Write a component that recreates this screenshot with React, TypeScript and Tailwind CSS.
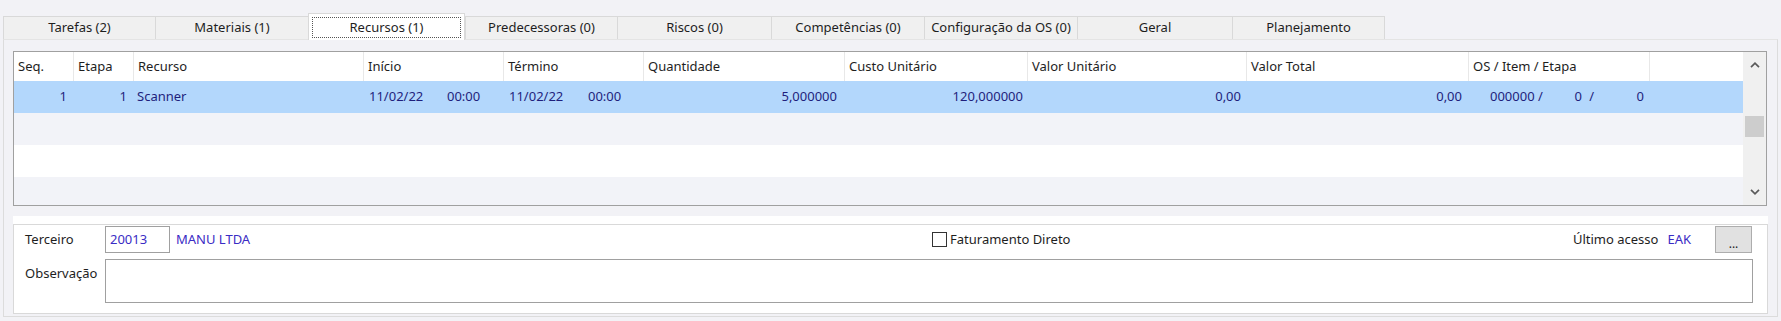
import React from "react";

const tabs: { label: string; cls: string; active?: boolean }[] = [
  { label: "Tarefas (2)", cls: "w-[152px]" },
  { label: "Materiais (1)", cls: "w-[153px]" },
  { label: "Recursos (1)", cls: "w-[157px]", active: true },
  { label: "Predecessoras (0)", cls: "w-[152px]" },
  { label: "Riscos (0)", cls: "w-[154px]" },
  { label: "Competências (0)", cls: "w-[153px]" },
  { label: "Configuração da OS (0)", cls: "w-[153px]" },
  { label: "Geral", cls: "w-[155px]" },
  { label: "Planejamento", cls: "w-[153px] border-r" },
];

const headers: { label: string; cls: string }[] = [
  { label: "Seq.", cls: "w-[60px]" },
  { label: "Etapa", cls: "w-[60px]" },
  { label: "Recurso", cls: "w-[230px]" },
  { label: "Início", cls: "w-[140px]" },
  { label: "Término", cls: "w-[140px]" },
  { label: "Quantidade", cls: "w-[201px]" },
  { label: "Custo Unitário", cls: "w-[183px]" },
  { label: "Valor Unitário", cls: "w-[219px]" },
  { label: "Valor Total", cls: "w-[222px]" },
  { label: "OS / Item / Etapa", cls: "w-[181px]" },
];

function Chevron({ up }: { up?: boolean }) {
  return (
    <svg width="10" height="6" viewBox="0 0 10 6">
      <polyline
        points={up ? "1,5.2 5,1.2 9,5.2" : "1,0.8 5,4.8 9,0.8"}
        fill="none"
        stroke="#5a5a5a"
        strokeWidth="1.7"
      />
    </svg>
  );
}

export default function App() {
  return (
    <div
      className="w-[1781px] h-[321px] bg-[#f2f2f6] overflow-hidden text-[13px] text-[#1e1e1e]"
      style={{ fontFamily: '"Noto Sans", "Open Sans", sans-serif' }}
    >
      {/* Tabs */}
      <div className="h-[39px] flex items-end pl-[3px]">
        {tabs.map((t) =>
          t.active ? (
            <div
              key={t.label}
              className={`${t.cls} h-[27px] -mb-px relative z-10 bg-white border border-b-0 border-[#d9d9d9] p-[3px] pb-[3px]`}
            >
              <div className="w-full h-[21px] border border-dotted border-[#555] flex items-center justify-center leading-none">
                {t.label}
              </div>
            </div>
          ) : (
            <div
              key={t.label}
              className={`${t.cls} h-[23px] bg-[#f0f0f0] border-l border-t border-[#d9d9d9] flex items-center justify-center leading-none pb-[1px]`}
            >
              {t.label}
            </div>
          )
        )}
      </div>

      {/* Tab panel */}
      <div className="ml-[3px] w-[1775px] h-[278px] border border-[#dcdcdc] border-t-[#e4e4e4] pl-[9px] pt-[11px]">
        {/* Grid */}
        <div className="w-[1754px] h-[155px] border border-[#a0a0a0] flex bg-white">
          <div className="w-[1729px] flex flex-col">
            <div className="h-[29px] flex bg-white">
              {headers.map((h) => (
                <div
                  key={h.label}
                  className={`${h.cls} border-r border-[#e8e8e8] pl-[4px] flex items-center`}
                >
                  {h.label}
                </div>
              ))}
              <div className="flex-1" />
            </div>
            <div className="h-[32px] flex bg-[#b3d7fc] text-[#1f1f7c] items-center">
              <div className="w-[60px] text-right pr-[7px]">1</div>
              <div className="w-[60px] text-right pr-[7px]">1</div>
              <div className="w-[230px] pl-[3px]">Scanner</div>
              <div className="w-[140px] pl-[5px] flex">
                <span className="w-[78px]">11/02/22</span>
                <span>00:00</span>
              </div>
              <div className="w-[140px] pl-[5px] flex">
                <span className="w-[79px]">11/02/22</span>
                <span>00:00</span>
              </div>
              <div className="w-[201px] text-right pr-[8px]">5,000000</div>
              <div className="w-[183px] text-right pr-[5px]">120,000000</div>
              <div className="w-[219px] text-right pr-[6px]">0,00</div>
              <div className="w-[222px] text-right pr-[7px]">0,00</div>
              <div className="w-[181px] flex">
                <span className="w-[21px]" />
                <span className="w-[60px]">000000 /</span>
                <span className="w-[32px] text-right">0</span>
                <span className="w-[12px] text-right">/</span>
                <span className="w-[50px] text-right">0</span>
              </div>
              <div className="flex-1" />
            </div>
            <div className="h-[32px] bg-[#f2f3f8]" />
            <div className="h-[32px] bg-white" />
            <div className="flex-1 bg-[#f2f3f8]" />
          </div>
          {/* Scrollbar */}
          <div className="w-[23px] bg-[#f0f0f0] flex flex-col">
            <div className="h-[26px] flex items-center justify-center">
              <Chevron up />
            </div>
            <div className="h-[38px]" />
            <div className="h-[21px] mx-[2px] bg-[#cdcdcd]" />
            <div className="flex-1" />
            <div className="h-[26px] flex items-center justify-center">
              <Chevron />
            </div>
          </div>
        </div>

        {/* Bottom section */}
        <div className="mt-[10px] w-[1755px] bg-white pt-[8px]">
          <div className="h-[90px] border border-[#d9d9d9] pl-[11px] bg-white">
            <div className="mt-[1px] h-[27px] flex items-center">
              <div className="w-[80px]">Terceiro</div>
              <div className="w-[65px] h-[27px] border border-[#a0a0a0] bg-white pl-[4px] flex items-center text-[#3a2cc4]">
                20013
              </div>
              <div className="w-[762px] pl-[6px] text-[#3a2cc4]">MANU LTDA</div>
              <div className="flex items-center">
                <div className="w-[15px] h-[15px] border border-[#333] bg-white" />
                <span className="ml-[3px]">Faturamento Direto</span>
              </div>
              <div className="flex-1" />
              <span>Último acesso</span>
              <span className="ml-[9px] text-[#3a2cc4]">EAK</span>
              <div className="ml-[24px] mr-[15px] w-[37px] h-[27px] -mt-[1px] bg-[#e1e1e1] border border-[#adadad] flex items-end justify-center pb-[2px] leading-none text-[12px]">
                ...
              </div>
            </div>
            <div className="mt-[6px] h-[44px] flex">
              <div className="w-[80px] pt-[5px]">Observação</div>
              <div className="w-[1648px] h-[44px] border border-[#a0a0a0] bg-white" />
            </div>
          </div>
        </div>
      </div>
    </div>
  );
}
